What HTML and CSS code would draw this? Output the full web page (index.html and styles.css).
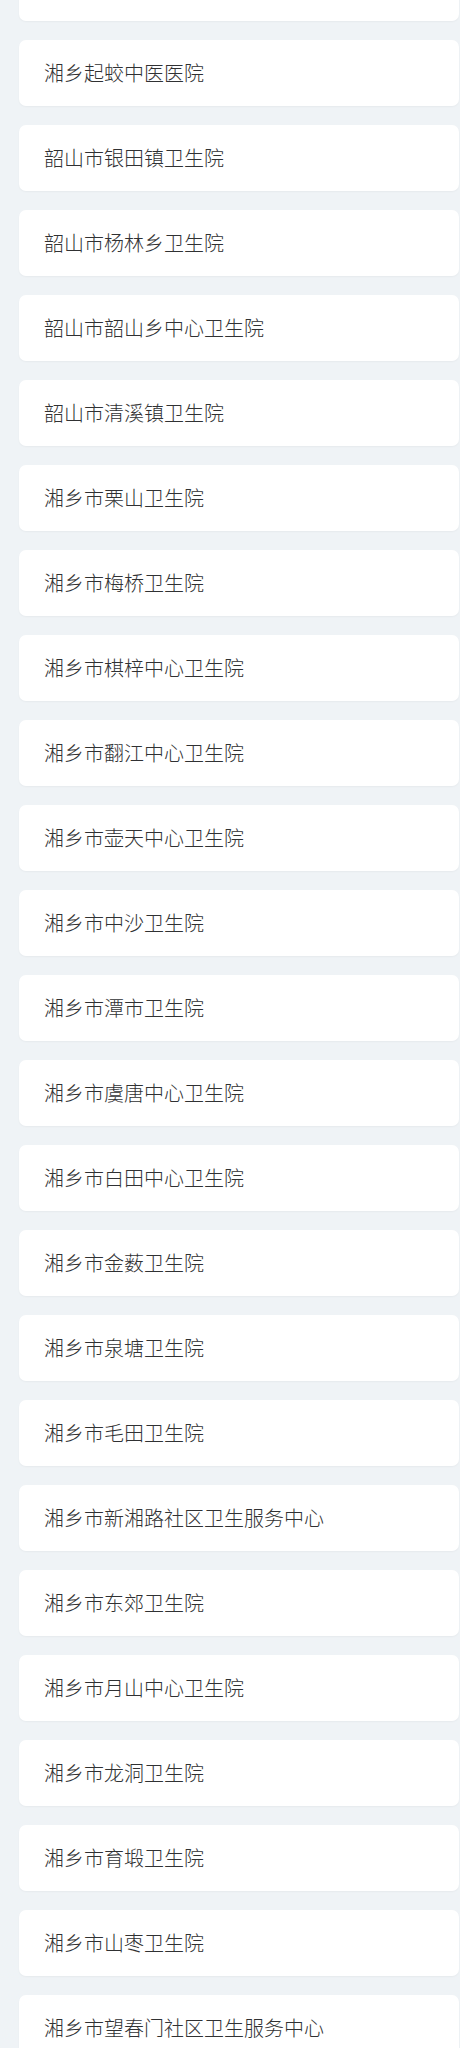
FILE: index.html
```html
<!DOCTYPE html>
<html lang="zh-CN">
<head>
<meta charset="utf-8">
<link rel="stylesheet" href="styles.css">
</head>
<body>
<div class="list">
  <div class="item first">湘乡市人民医院</div>
  <div class="item">湘乡起蛟中医医院</div>
  <div class="item">韶山市银田镇卫生院</div>
  <div class="item">韶山市杨林乡卫生院</div>
  <div class="item">韶山市韶山乡中心卫生院</div>
  <div class="item">韶山市清溪镇卫生院</div>
  <div class="item">湘乡市栗山卫生院</div>
  <div class="item">湘乡市梅桥卫生院</div>
  <div class="item">湘乡市棋梓中心卫生院</div>
  <div class="item">湘乡市翻江中心卫生院</div>
  <div class="item">湘乡市壶天中心卫生院</div>
  <div class="item">湘乡市中沙卫生院</div>
  <div class="item">湘乡市潭市卫生院</div>
  <div class="item">湘乡市虞唐中心卫生院</div>
  <div class="item">湘乡市白田中心卫生院</div>
  <div class="item">湘乡市金薮卫生院</div>
  <div class="item">湘乡市泉塘卫生院</div>
  <div class="item">湘乡市毛田卫生院</div>
  <div class="item">湘乡市新湘路社区卫生服务中心</div>
  <div class="item">湘乡市东郊卫生院</div>
  <div class="item">湘乡市月山中心卫生院</div>
  <div class="item">湘乡市龙洞卫生院</div>
  <div class="item">湘乡市育塅卫生院</div>
  <div class="item">湘乡市山枣卫生院</div>
  <div class="item">湘乡市望春门社区卫生服务中心</div>
  <div class="item">湘乡市城郊卫生院</div>
</div>
</body>
</html>
```

FILE: styles.css
```css
html, body {
  margin: 0;
  padding: 0;
  background: #eff3f6;
}
body {
  font-family: "Noto Sans CJK SC", "Noto Sans", sans-serif;
  color: #303133;
  overflow: hidden;
}
.list {
  display: flex;
  flex-direction: column;
  gap: 19px;
  padding: 0 1px 0 19px;
}
.item {
  height: 66px;
  box-sizing: border-box;
  display: flex;
  align-items: center;
  padding-left: 25px;
  background: #ffffff;
  border-radius: 7px;
  box-shadow: 0 1px 2px rgba(0, 0, 0, 0.04);
  font-size: 20px;
  font-weight: 300;
  line-height: 1;
}
.first {
  margin-top: -45px;
}
```
